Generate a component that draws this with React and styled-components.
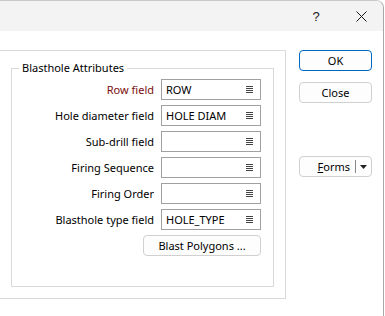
import React from 'react';
import styled, { createGlobalStyle } from 'styled-components';

const GlobalStyle = createGlobalStyle`
  html, body {
    margin: 0;
    padding: 0;
    background: #ffffff;
  }
  body {
    font-family: "Segoe UI", "Noto Sans", "Liberation Sans", sans-serif;
    font-size: 11px;
    color: #000;
  }
`;

const fields = [
  { label: 'Row field', value: 'ROW', required: true },
  { label: 'Hole diameter field', value: 'HOLE DIAM' },
  { label: 'Sub-drill field', value: '' },
  { label: 'Firing Sequence', value: '' },
  { label: 'Firing Order', value: '' },
  { label: 'Blasthole type field', value: 'HOLE_TYPE' },
];

function ListIcon() {
  return (
    <svg width="7" height="8" viewBox="0 0 7 8" shapeRendering="crispEdges">
      <rect x="0" y="0" width="7" height="1" fill="#444" />
      <rect x="0" y="2" width="7" height="1" fill="#444" />
      <rect x="0" y="4" width="7" height="1" fill="#444" />
      <rect x="0" y="6" width="7" height="1" fill="#444" />
    </svg>
  );
}

function CloseIcon() {
  return (
    <svg width="11" height="11" viewBox="0 0 11 11">
      <path d="M0.5 0.5 L10.5 10.5 M10.5 0.5 L0.5 10.5" stroke="#1a1a1a" strokeWidth="1" fill="none" />
    </svg>
  );
}

function App() {
  return (
    <>
      <GlobalStyle />
      <Window>
        <TitleBar>
          <TitleButton w={46}>?</TitleButton>
          <TitleButton w={44}><CloseIcon /></TitleButton>
        </TitleBar>
        <Body>
          <Panel>
            <Group>
              <Legend>Blasthole Attributes</Legend>
              <FieldGrid>
                {fields.map((f) => (
                  <React.Fragment key={f.label}>
                    <Label required={f.required}>{f.label}</Label>
                    <FieldBox>
                      <FieldValue>{f.value}</FieldValue>
                      <ListIcon />
                    </FieldBox>
                  </React.Fragment>
                ))}
                <Spacer />
                <WideButton>Blast Polygons ...</WideButton>
              </FieldGrid>
            </Group>
          </Panel>
          <SideColumn>
            <DialogButton primary>OK</DialogButton>
            <DialogButton>Close</DialogButton>
            <SplitButton>
              <SplitMain><u>F</u>orms</SplitMain>
              <SplitArrow>
                <svg width="7" height="4" viewBox="0 0 7 4">
                  <path d="M0 0 L7 0 L3.5 4 Z" fill="#222" />
                </svg>
              </SplitArrow>
            </SplitButton>
          </SideColumn>
        </Body>
      </Window>
    </>
  );
}

const Window = styled.div`
  width: 383px;
  height: 315px;
  border-top: 1px solid #c8c8c8;
  border-right: 1px solid #a8a8a8;
  border-top-right-radius: 8px;
  overflow: hidden;
  background: #ffffff;
`;

const TitleBar = styled.div`
  height: 30px;
  background: #f3f3f3;
  display: flex;
  justify-content: flex-end;
  align-items: center;
`;

const TitleButton = styled.div`
  width: ${(p) => p.w}px;
  height: 30px;
  display: flex;
  align-items: center;
  justify-content: center;
  font-size: 13px;
  color: #1a1a1a;
  font-family: "Liberation Sans", sans-serif;
`;

const Body = styled.div`
  display: flex;
  align-items: flex-start;
  padding-top: 19px;
`;

const Panel = styled.div`
  width: 286px;
  height: 249px;
  box-sizing: border-box;
  border: 1px solid #d9d9d9;
  border-left: none;
  padding: 10px 11px 11px 11px;
`;

const Group = styled.fieldset`
  margin: 0;
  height: 100%;
  box-sizing: border-box;
  border: 1px solid #d9d9d9;
  padding: 4px 0 0 0;
  min-width: 0;
`;

const Legend = styled.legend`
  margin-left: 7px;
  padding: 0 3px;
  line-height: 14px;
  color: #000;
`;

const FieldGrid = styled.div`
  display: grid;
  grid-template-columns: 142px 100px;
  column-gap: 7px;
  row-gap: 5px;
  align-items: center;
`;

const Label = styled.div`
  text-align: right;
  white-space: nowrap;
  color: ${(p) => (p.required ? '#7a0c0c' : '#000')};
`;

const FieldBox = styled.div`
  height: 21px;
  box-sizing: border-box;
  border: 1px solid #a0a0a0;
  display: flex;
  align-items: center;
  justify-content: space-between;
  padding: 0 7px 0 4px;
`;

const FieldValue = styled.span`
  white-space: nowrap;
`;

const Spacer = styled.div``;

const WideButton = styled.div`
  margin-left: -18px;
  height: 21px;
  box-sizing: border-box;
  border: 1px solid #d0d0d0;
  border-radius: 4px;
  background: #fdfdfd;
  display: flex;
  align-items: center;
  justify-content: center;
`;

const SideColumn = styled.div`
  margin-left: 13px;
  display: flex;
  flex-direction: column;
  width: 73px;
`;

const DialogButton = styled.div`
  height: 21px;
  box-sizing: border-box;
  border: 1px solid ${(p) => (p.primary ? '#0067c0' : '#d0d0d0')};
  border-radius: 4px;
  background: #fdfdfd;
  display: flex;
  align-items: center;
  justify-content: center;
  margin-bottom: 11px;
`;

const SplitButton = styled.div`
  margin-top: 42px;
  height: 21px;
  box-sizing: border-box;
  border: 1px solid #d0d0d0;
  border-radius: 4px;
  background: #fdfdfd;
  display: flex;
  align-items: center;
`;

const SplitMain = styled.div`
  flex: 1;
  text-align: right;
  padding-right: 5px;
  border-right: 1px solid #888;
  line-height: 13px;
`;

const SplitArrow = styled.div`
  width: 15px;
  display: flex;
  justify-content: center;
  align-items: center;
`;

export default App;
